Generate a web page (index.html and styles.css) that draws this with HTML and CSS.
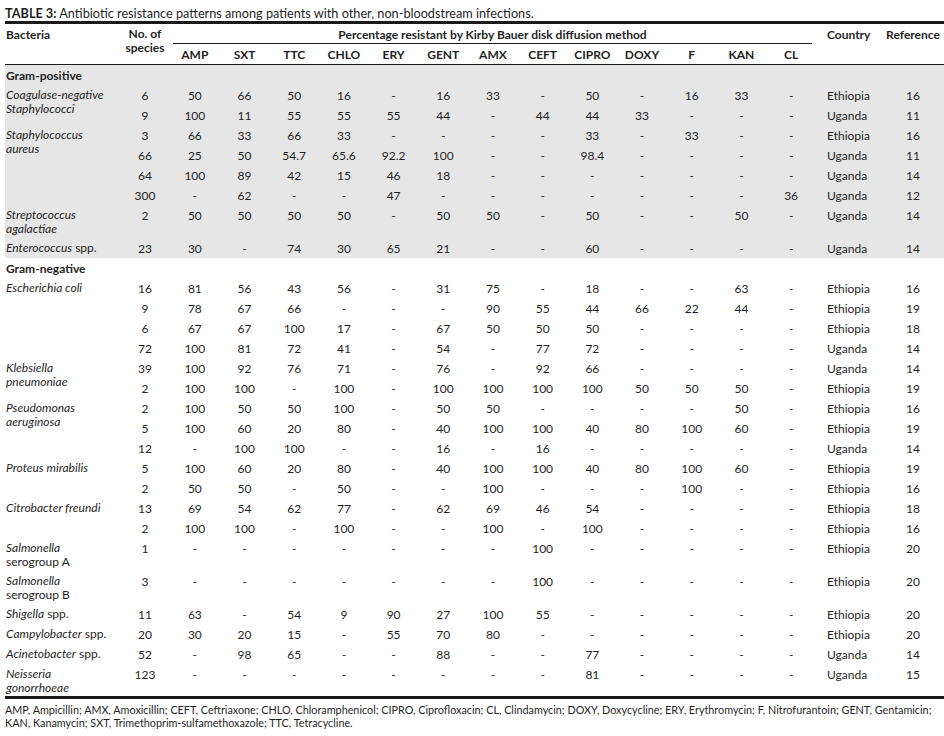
FILE: index.html
```html
<!DOCTYPE html>
<html lang="en">
<head>
<meta charset="utf-8">
<title>Table 3</title>
<link rel="stylesheet" href="styles.css">
</head>
<body>
<div class="page">
  <p class="caption"><b>TABLE 3:</b> Antibiotic resistance patterns among patients with other, non-bloodstream infections.</p>
  <table class="data">
    <colgroup>
      <col class="c-bac"><col class="c-num">
      <col class="c-drug"><col class="c-drug"><col class="c-drug"><col class="c-drug"><col class="c-drug"><col class="c-drug"><col class="c-drug"><col class="c-drug"><col class="c-drug"><col class="c-drug"><col class="c-drug"><col class="c-drug"><col class="c-drug">
      <col class="c-country"><col class="c-ref">
    </colgroup>
    <thead>
      <tr>
        <th rowspan="2" class="bac hb">Bacteria</th>
        <th rowspan="2" class="num hb">No. of<br>species</th>
        <th colspan="13" class="span"><div class="span-in">Percentage resistant by Kirby Bauer disk diffusion method</div></th>
        <th rowspan="2" class="country hb">Country</th>
        <th rowspan="2" class="hb">Reference</th>
      </tr>
      <tr class="drugs">
        <th>AMP</th><th>SXT</th><th>TTC</th><th>CHLO</th><th>ERY</th><th>GENT</th><th>AMX</th><th>CEFT</th><th>CIPRO</th><th>DOXY</th><th>F</th><th>KAN</th><th>CL</th>
      </tr>
    </thead>
    <tbody class="pos">
      <tr><td colspan="17" class="group">Gram-positive</td></tr>
      <tr><td rowspan="2" class="bac"><i>Coagulase-negative<br>Staphylococci</i></td><td>6</td><td>50</td><td>66</td><td>50</td><td>16</td><td>-</td><td>16</td><td>33</td><td>-</td><td>50</td><td>-</td><td>16</td><td>33</td><td>-</td><td class="country">Ethiopia</td><td>16</td></tr>
      <tr><td>9</td><td>100</td><td>11</td><td>55</td><td>55</td><td>55</td><td>44</td><td>-</td><td>44</td><td>44</td><td>33</td><td>-</td><td>-</td><td>-</td><td class="country">Uganda</td><td>11</td></tr>
      <tr><td rowspan="4" class="bac"><i>Staphylococcus<br>aureus</i></td><td>3</td><td>66</td><td>33</td><td>66</td><td>33</td><td>-</td><td>-</td><td>-</td><td>-</td><td>33</td><td>-</td><td>33</td><td>-</td><td>-</td><td class="country">Ethiopia</td><td>16</td></tr>
      <tr><td>66</td><td>25</td><td>50</td><td>54.7</td><td>65.6</td><td>92.2</td><td>100</td><td>-</td><td>-</td><td>98.4</td><td>-</td><td>-</td><td>-</td><td>-</td><td class="country">Uganda</td><td>11</td></tr>
      <tr><td>64</td><td>100</td><td>89</td><td>42</td><td>15</td><td>46</td><td>18</td><td>-</td><td>-</td><td>-</td><td>-</td><td>-</td><td>-</td><td>-</td><td class="country">Uganda</td><td>14</td></tr>
      <tr><td>300</td><td>-</td><td>62</td><td>-</td><td>-</td><td>47</td><td>-</td><td>-</td><td>-</td><td>-</td><td>-</td><td>-</td><td>-</td><td>36</td><td class="country">Uganda</td><td>12</td></tr>
      <tr><td class="bac"><i>Streptococcus<br>agalactiae</i></td><td>2</td><td>50</td><td>50</td><td>50</td><td>50</td><td>-</td><td>50</td><td>50</td><td>-</td><td>50</td><td>-</td><td>-</td><td>50</td><td>-</td><td class="country">Uganda</td><td>14</td></tr>
      <tr><td class="bac"><i>Enterococcus</i> spp.</td><td>23</td><td>30</td><td>-</td><td>74</td><td>30</td><td>65</td><td>21</td><td>-</td><td>-</td><td>60</td><td>-</td><td>-</td><td>-</td><td>-</td><td class="country">Uganda</td><td>14</td></tr>
    </tbody>
    <tbody class="neg">
      <tr><td colspan="17" class="group">Gram-negative</td></tr>
      <tr><td rowspan="4" class="bac"><i>Escherichia coli</i></td><td>16</td><td>81</td><td>56</td><td>43</td><td>56</td><td>-</td><td>31</td><td>75</td><td>-</td><td>18</td><td>-</td><td>-</td><td>63</td><td>-</td><td class="country">Ethiopia</td><td>16</td></tr>
      <tr><td>9</td><td>78</td><td>67</td><td>66</td><td>-</td><td>-</td><td>-</td><td>90</td><td>55</td><td>44</td><td>66</td><td>22</td><td>44</td><td>-</td><td class="country">Ethiopia</td><td>19</td></tr>
      <tr><td>6</td><td>67</td><td>67</td><td>100</td><td>17</td><td>-</td><td>67</td><td>50</td><td>50</td><td>50</td><td>-</td><td>-</td><td>-</td><td>-</td><td class="country">Ethiopia</td><td>18</td></tr>
      <tr><td>72</td><td>100</td><td>81</td><td>72</td><td>41</td><td>-</td><td>54</td><td>-</td><td>77</td><td>72</td><td>-</td><td>-</td><td>-</td><td>-</td><td class="country">Uganda</td><td>14</td></tr>
      <tr><td rowspan="2" class="bac"><i>Klebsiella<br>pneumoniae</i></td><td>39</td><td>100</td><td>92</td><td>76</td><td>71</td><td>-</td><td>76</td><td>-</td><td>92</td><td>66</td><td>-</td><td>-</td><td>-</td><td>-</td><td class="country">Uganda</td><td>14</td></tr>
      <tr><td>2</td><td>100</td><td>100</td><td>-</td><td>100</td><td>-</td><td>100</td><td>100</td><td>100</td><td>100</td><td>50</td><td>50</td><td>50</td><td>-</td><td class="country">Ethiopia</td><td>19</td></tr>
      <tr><td rowspan="3" class="bac"><i>Pseudomonas<br>aeruginosa</i></td><td>2</td><td>100</td><td>50</td><td>50</td><td>100</td><td>-</td><td>50</td><td>50</td><td>-</td><td>-</td><td>-</td><td>-</td><td>50</td><td>-</td><td class="country">Ethiopia</td><td>16</td></tr>
      <tr><td>5</td><td>100</td><td>60</td><td>20</td><td>80</td><td>-</td><td>40</td><td>100</td><td>100</td><td>40</td><td>80</td><td>100</td><td>60</td><td>-</td><td class="country">Ethiopia</td><td>19</td></tr>
      <tr><td>12</td><td>-</td><td>100</td><td>100</td><td>-</td><td>-</td><td>16</td><td>-</td><td>16</td><td>-</td><td>-</td><td>-</td><td>-</td><td>-</td><td class="country">Uganda</td><td>14</td></tr>
      <tr><td rowspan="2" class="bac"><i>Proteus mirabilis</i></td><td>5</td><td>100</td><td>60</td><td>20</td><td>80</td><td>-</td><td>40</td><td>100</td><td>100</td><td>40</td><td>80</td><td>100</td><td>60</td><td>-</td><td class="country">Ethiopia</td><td>19</td></tr>
      <tr><td>2</td><td>50</td><td>50</td><td>-</td><td>50</td><td>-</td><td>-</td><td>100</td><td>-</td><td>-</td><td>-</td><td>100</td><td>-</td><td>-</td><td class="country">Ethiopia</td><td>16</td></tr>
      <tr><td rowspan="2" class="bac"><i>Citrobacter freundi</i></td><td>13</td><td>69</td><td>54</td><td>62</td><td>77</td><td>-</td><td>62</td><td>69</td><td>46</td><td>54</td><td>-</td><td>-</td><td>-</td><td>-</td><td class="country">Ethiopia</td><td>18</td></tr>
      <tr><td>2</td><td>100</td><td>100</td><td>-</td><td>100</td><td>-</td><td>-</td><td>100</td><td>-</td><td>100</td><td>-</td><td>-</td><td>-</td><td>-</td><td class="country">Ethiopia</td><td>16</td></tr>
      <tr><td class="bac"><i>Salmonella</i><br>serogroup A</td><td>1</td><td>-</td><td>-</td><td>-</td><td>-</td><td>-</td><td>-</td><td>-</td><td>100</td><td>-</td><td>-</td><td>-</td><td>-</td><td>-</td><td class="country">Ethiopia</td><td>20</td></tr>
      <tr><td class="bac"><i>Salmonella</i><br>serogroup B</td><td>3</td><td>-</td><td>-</td><td>-</td><td>-</td><td>-</td><td>-</td><td>-</td><td>100</td><td>-</td><td>-</td><td>-</td><td>-</td><td>-</td><td class="country">Ethiopia</td><td>20</td></tr>
      <tr><td class="bac"><i>Shigella</i> spp.</td><td>11</td><td>63</td><td>-</td><td>54</td><td>9</td><td>90</td><td>27</td><td>100</td><td>55</td><td>-</td><td>-</td><td>-</td><td>-</td><td>-</td><td class="country">Ethiopia</td><td>20</td></tr>
      <tr><td class="bac"><i>Campylobacter</i> spp.</td><td>20</td><td>30</td><td>20</td><td>15</td><td>-</td><td>55</td><td>70</td><td>80</td><td>-</td><td>-</td><td>-</td><td>-</td><td>-</td><td>-</td><td class="country">Ethiopia</td><td>20</td></tr>
      <tr><td class="bac"><i>Acinetobacter</i> spp.</td><td>52</td><td>-</td><td>98</td><td>65</td><td>-</td><td>-</td><td>88</td><td>-</td><td>-</td><td>77</td><td>-</td><td>-</td><td>-</td><td>-</td><td class="country">Uganda</td><td>14</td></tr>
      <tr class="last"><td class="bac"><i>Neisseria<br>gonorrhoeae</i></td><td>123</td><td>-</td><td>-</td><td>-</td><td>-</td><td>-</td><td>-</td><td>-</td><td>-</td><td>81</td><td>-</td><td>-</td><td>-</td><td>-</td><td class="country">Uganda</td><td>15</td></tr>
    </tbody>
  </table>
  <p class="note">AMP, Ampicillin; AMX, Amoxicillin; CEFT, Ceftriaxone; CHLO, Chloramphenicol; CIPRO, Ciprofloxacin; CL, Clindamycin; DOXY, Doxycycline; ERY, Erythromycin; F, Nitrofurantoin; GENT, Gentamicin;<br>KAN, Kanamycin; SXT, Trimethoprim-sulfamethoxazole; TTC, Tetracycline.</p>
</div>
</body>
</html>
```

FILE: styles.css
```css
html, body {
  margin: 0;
  padding: 0;
  background: #ffffff;
}

body {
  font-family: Lato, "Liberation Sans", sans-serif;
  font-size: 12px;
  color: #1f1f1f;
}

.page {
  padding: 5.5px 0 0 5px;
}

.caption {
  margin: 0 0 0.5px 0;
  font-size: 12.7px;
  line-height: 15px;
  white-space: nowrap;
}

.data {
  width: 939px;
  table-layout: fixed;
  border-collapse: separate;
  border-spacing: 0;
  border-top: 3px solid #1a1a1a;
  border-bottom: 3px solid #1a1a1a;
}

.c-bac { width: 115px; }
.c-num { width: 50px; }
.c-drug { width: 49.7px; }
.c-country { width: 66px; }
.c-ref { width: 62px; }

.data th,
.data td {
  padding: 3.5px 0;
  line-height: 13px;
  vertical-align: top;
  text-align: center;
  white-space: nowrap;
}

.data th {
  font-weight: bold;
}

.data th.hb,
.drugs th {
  border-bottom: 1px solid #1a1a1a;
}

.data th.num {
  padding-top: 2.8px;
  line-height: 14.4px;
}

.data th.span {
  padding: 0;
}

.span-in {
  margin: 0 4px 0 3px;
  padding: 3.5px 0 2.5px;
  border-bottom: 1px solid #1a1a1a;
}

.data td.bac {
  text-align: left;
  padding: 2.8px 0 1.4px 1px;
  line-height: 14.4px;
}

.data th.bac {
  text-align: left;
  padding-left: 1px;
}

.data .country {
  text-align: left;
  padding-left: 11px;
}

.data td.group {
  text-align: left;
  padding-left: 1px;
  font-weight: bold;
}

.data tr.last td {
  padding-bottom: 0;
}

.pos tr {
  background: #e6e6e6;
}

.note {
  margin: 4px 0 0 0;
  font-size: 10.8px;
  line-height: 13px;
  white-space: nowrap;
}
```
